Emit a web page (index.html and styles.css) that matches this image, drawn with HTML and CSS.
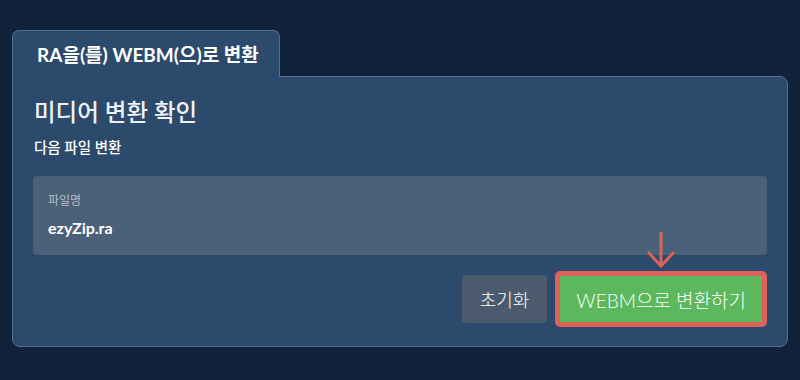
FILE: index.html
```html
<!DOCTYPE html>
<html lang="ko">
<head>
  <meta charset="UTF-8"/>
  <meta name="viewport" content="width=device-width,initial-scale=1.0"/>
  <title>RA to WEBM</title>
  <link rel="stylesheet" href="styles.css">
</head>
<body>

<div class="wrap">
  <div class="tabs">
    <div class="tab">RA을(를) WEBM(으)로 변환</div>
  </div>

  <div class="panel">
    <h2>미디어 변환 확인</h2>
    <p class="sub">다음 파일 변환</p>

    <div class="file">
      <div class="label">파일명</div>
      <div class="name">ezyZip.ra</div>
    </div>

    <div class="actions">
      <button class="btn reset">초기화</button>
      <div class="go-wrap">
        <svg class="arrow" width="30" height="38" viewBox="0 0 30 38">
          <path d="M15 1 V35 M2 21 L15 35 L28 21" fill="none" stroke="#dc625b" stroke-width="3"/>
        </svg>
        <button class="btn go">WEBM으로 변환하기</button>
      </div>
    </div>
  </div>
</div>

</body>
</html>
```

FILE: styles.css
```css
/* ========== Base ========== */
* { margin:0; padding:0; box-sizing:border-box }
body {
  font-family: Lato, "Noto Sans CJK KR", sans-serif;
  background: #11233a;
  color: #fff;
}
.wrap { padding: 30px 12px 0 12px }

/* ========== Tab ========== */
.tabs { display:flex; position:relative; z-index:2; margin-bottom:-1px }
.tab {
  width: 268px;
  height: 47px;
  padding: 12px 0 0 24px;
  background: #2c4a6b;
  border: 1px solid #56708e;
  border-bottom: none;
  border-radius: 7px 7px 0 0;
  font-size: 19px;
  font-weight: 700;
  line-height: 24px;
}

/* ========== Panel ========== */
.panel {
  background: #2c4a6b;
  border: 1px solid #56708e;
  border-radius: 0 8px 8px 8px;
  padding: 20px 20px 19px 20px;
}
.panel h2 {
  font-size: 23.5px;
  font-weight: 500;
  line-height: 30px;
  margin-left: 1px;
  color: #eef1f5;
}
.sub {
  font-size: 14.5px;
  font-weight: 500;
  line-height: 20px;
  margin: 11px 0 0 1px;
}

.file {
  margin-top: 18px;
  background: #4b6079;
  border-radius: 4px;
  padding: 17px 15px 16px 15px;
}
.file .label { font-size: 12px; line-height: 16px; color: #b3bfcd }
.file .name { font-size: 16px; font-weight: 700; line-height: 22px; margin-top: 8px }

/* ========== Buttons ========== */
.actions {
  display: flex;
  justify-content: flex-end;
  align-items: center;
  gap: 8px;
  margin-top: 16px;
}
.btn {
  font-family: Lato, "Noto Sans CJK KR", sans-serif;
  font-weight: 300;
  color: #fff;
  border: none;
  border-radius: 4px;
  cursor: pointer;
}
.reset {
  height: 48px;
  padding: 0 18px;
  font-size: 18px;
  background: #4b5b6d;
}
.go-wrap { position: relative }
.go {
  height: 56px;
  padding: 0 16px;
  font-size: 19px;
  background: #5cb85c;
  border: 5px solid #dc625b;
  border-radius: 5px;
}
.arrow {
  position: absolute;
  left: 50%;
  bottom: 100%;
  margin-left: -15px;
  margin-bottom: 2px;
}
```
